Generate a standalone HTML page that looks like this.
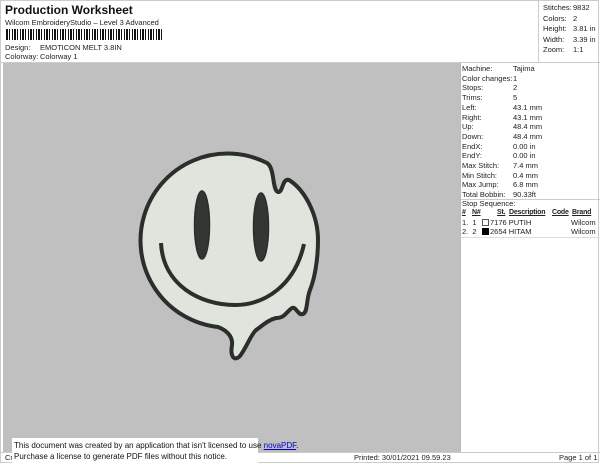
<!DOCTYPE html>
<html><head><meta charset="utf-8"><style>
body{margin:0;width:600px;height:464px;background:#fff;font-family:"Liberation Sans",sans-serif;color:#222;position:relative;overflow:hidden;font-size:7.5px}
.a{position:absolute;white-space:nowrap}
.h{font-weight:bold;text-decoration:underline;font-size:7px;letter-spacing:-0.2px}
</style></head><body>
<div class="a" style="left:0;top:0;width:599px;height:463px;border:1px solid #ccc;box-sizing:border-box"></div>
<div class="a" style="left:5px;top:3px;font-size:12px;font-weight:bold;color:#111">Production Worksheet</div>
<div class="a" style="left:5px;top:18px">Wilcom EmbroideryStudio – Level 3 Advanced</div>
<div class="a" style="left:6px;top:29px;width:157px;height:11px;background:repeating-linear-gradient(90deg,#111 0 2px,#fff 2px 3px,#111 3px 4px,#fff 4px 6px,#111 6px 7px,#fff 7px 8px)"></div>
<div class="a" style="left:5px;top:43px">Design:</div><div class="a" style="left:40px;top:43px">EMOTICON MELT 3.8IN</div>
<div class="a" style="left:5px;top:52px">Colorway:</div><div class="a" style="left:40px;top:52px">Colorway 1</div>
<div class="a" style="left:538px;top:0;width:1px;height:62px;background:#ccc"></div>
<div class="a" style="left:0;top:62px;width:600px;height:1px;background:#ccc"></div>
<div class="a" style="left:543px;top:3px;line-height:10.5px">Stitches:<br>Colors:<br>Height:<br>Width:<br>Zoom:</div>
<div class="a" style="left:573px;top:3px;line-height:10.5px">9832<br>2<br>3.81 in<br>3.39 in<br>1:1</div>
<div class="a" style="left:3px;top:63px;width:457px;height:389px;background:#c0c0c0"></div>
<div class="a" style="left:460px;top:63px;width:1px;height:389px;background:#bbb"></div>
<svg class="a" style="left:0;top:0" width="600" height="464">
<path d="M267 163 C275 168,272 190,278 192 C283 193,282 178,289 180 C305 190,318 215,318 240 C318 262,314 280,310 290 C306 300,308 312,303 314 C298 316,296 306,292 308 C286 312,285 318,276 318 C268 320,262 326,256 330 C250 336,248 345,240 356 C234 362,230 356,232 345 C233 336,226 330,218 327 A87 87 0 1 1 267 163 Z" fill="#dfe5dc" stroke="#2b2e2b" stroke-width="4"/>
<ellipse cx="202" cy="225" rx="7.5" ry="34" fill="#333633" stroke="#2b2e2b" stroke-width="1.5"/>
<ellipse cx="261" cy="227" rx="7.5" ry="34" fill="#333633" stroke="#2b2e2b" stroke-width="1.5"/>
<path d="M161 243 C163 285 200 305 235 305 C265 305 295 285 304 244" fill="none" stroke="#2b2e2b" stroke-width="4"/>
</svg>
<div class="a" style="left:462px;top:64px;line-height:9.7px">Machine:<br>Color changes:<br>Stops:<br>Trims:<br>Left:<br>Right:<br>Up:<br>Down:<br>EndX:<br>EndY:<br>Max Stitch:<br>Min Stitch:<br>Max Jump:<br>Total Bobbin:</div>
<div class="a" style="left:513px;top:64px;line-height:9.7px">Tajima<br>1<br>2<br>5<br>43.1 mm<br>43.1 mm<br>48.4 mm<br>48.4 mm<br>0.00 in<br>0.00 in<br>7.4 mm<br>0.4 mm<br>6.8 mm<br>90.33ft</div>
<div class="a" style="left:461px;top:199px;width:139px;height:1px;background:#ccc"></div>
<div class="a" style="left:462px;top:199px">Stop Sequence:</div>
<div class="a h" style="left:462px;top:209px">#</div>
<div class="a h" style="left:472px;top:209px">N#</div>
<div class="a h" style="left:497px;top:209px">St.</div>
<div class="a h" style="left:509px;top:209px">Description</div>
<div class="a h" style="left:552px;top:209px">Code</div>
<div class="a h" style="left:572px;top:209px">Brand</div>
<div class="a" style="left:462px;top:218px">1.&nbsp; 1</div>
<div class="a" style="left:482px;top:219px;width:5px;height:5px;border:1px solid #555;background:#fff"></div>
<div class="a" style="left:490px;top:218px">7176 PUTIH</div><div class="a" style="left:571px;top:218px">Wilcom</div>
<div class="a" style="left:462px;top:227px">2.&nbsp; 2</div>
<div class="a" style="left:482px;top:228px;width:7px;height:7px;background:#000"></div>
<div class="a" style="left:490px;top:227px">2654 HITAM</div><div class="a" style="left:571px;top:227px">Wilcom</div>
<div class="a" style="left:461px;top:237px;width:139px;height:1px;background:#ddd"></div>
<div class="a" style="left:0;top:452px;width:600px;height:1px;background:#ccc"></div>
<div class="a" style="left:5px;top:453px">Cr</div>
<div class="a" style="left:354px;top:453px">Printed: 30/01/2021 09.59.23</div>
<div class="a" style="left:559px;top:453px">Page 1 of 1</div>
<div class="a" style="left:12px;top:438px;width:246px;height:26px;background:#fff"></div>
<div class="a" style="left:14px;top:440px;font-size:8px;line-height:11px;color:#111">This document was created by an application that isn't licensed to use <span style="color:#00c;text-decoration:underline">novaPDF</span>.<br>Purchase a license to generate PDF files without this notice.</div>
</body></html>
